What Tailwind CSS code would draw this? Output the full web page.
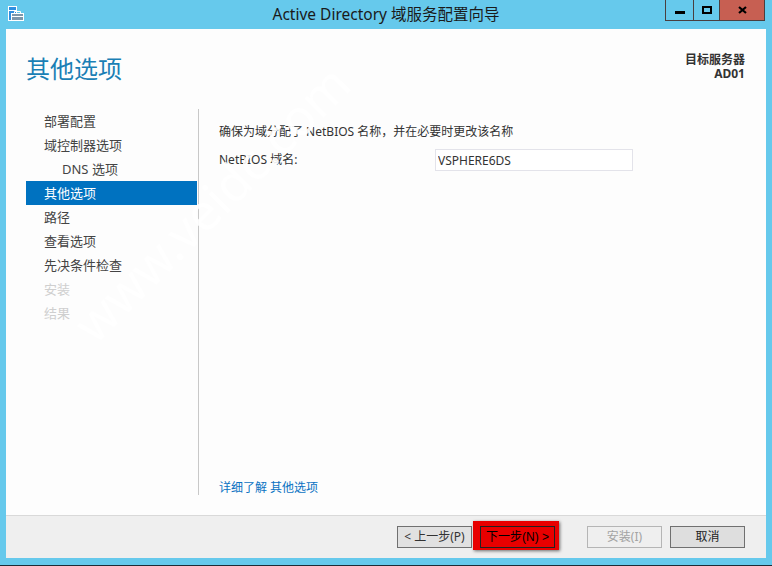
<!DOCTYPE html>
<html lang="zh">
<head>
    <meta charset="utf-8"/>
    <title>Active Directory 域服务配置向导</title>
    <script src="https://cdn.jsdelivr.net/npm/@tailwindcss/browser@4"></script>
</head>
<body class="w-[772px] h-[566px] overflow-hidden bg-[#66c9ec] relative font-['Noto_Sans','Noto_Sans_CJK_SC',sans-serif] text-[13px] text-[#333]">
    <div class="flex flex-col h-full">
        <!-- title bar -->
        <div class="h-[29px] shrink-0 flex items-start relative">
            <svg class="absolute left-[8px] top-[6px]" width="16" height="15" viewBox="0 0 16 15">
                <rect x="0.5" y="0.5" width="8" height="14" fill="#2f8fe0" stroke="#fff"/>
                <rect x="1" y="4" width="7" height="1" fill="#fff"/>
                <rect x="3.5" y="7.5" width="12" height="7" fill="#7d97ab" stroke="#fff"/>
                <path d="M6.5 7.5V5.5h6v2M4 10.5h11" fill="none" stroke="#fff"/>
            </svg>
            <div class="flex-1 text-center pt-[4px] text-[15.5px] leading-[20px] text-[#1a1a1a]">Active Directory 域服务配置向导</div>
            <div class="absolute right-[7px] top-0 flex h-[21px] border border-t-0 border-[#4a3f3f]">
                <div class="w-[28px] border-r border-[#4a3f3f] flex items-center justify-center"><div class="w-[10px] h-[3px] bg-black mt-[5px]"></div></div>
                <div class="w-[26px] border-r border-[#4a3f3f] flex items-center justify-center"><div class="w-[10px] h-[8px] border-2 border-black"></div></div>
                <div class="w-[44px] bg-[#c75f52] flex items-center justify-center">
                    <svg width="9" height="8" viewBox="0 0 9 8"><path d="M1 1l7 6M8 1l-7 6" stroke="#000" stroke-width="2.2" fill="none"/></svg>
                </div>
            </div>
        </div>
        <!-- window body -->
        <div class="mx-[6px] h-[529px] flex flex-col bg-[#fdfdfd]">
            <div class="h-[487px] shrink-0 flex flex-col border-b border-[#d9d9d9]">
                <div class="h-[80px] shrink-0 flex justify-between pl-[20px] pr-[21px]">
                    <h1 class="text-[24px] leading-[32px] pt-[24px] text-[#1a7fb5] h-fit">其他选项</h1>
                    <div class="pt-[24px] text-right font-bold text-[12px] leading-[14px] text-[#333]">
                        <div>目标服务器</div>
                        <div>AD01</div>
                    </div>
                </div>
                <div class="flex flex-1 min-h-0 pb-[20px]">
                    <nav class="w-[171px] shrink-0 flex flex-col text-[13px] leading-[24px] text-[#444] ml-[20px]">
                        <div class="h-[24px] pl-[18px]">部署配置</div>
                        <div class="h-[24px] pl-[18px]">域控制器选项</div>
                        <div class="h-[24px] pl-[36px]">DNS 选项</div>
                        <div class="h-[24px] pl-[18px] bg-[#0072c0] text-white">其他选项</div>
                        <div class="h-[24px] pl-[18px]">路径</div>
                        <div class="h-[24px] pl-[18px]">查看选项</div>
                        <div class="h-[24px] pl-[18px]">先决条件检查</div>
                        <div class="h-[24px] pl-[18px] text-[#cfcfcf]">安装</div>
                        <div class="h-[24px] pl-[18px] text-[#cfcfcf]">结果</div>
                    </nav>
                    <div class="w-px bg-[#c8c8c8] ml-[1px]"></div>
                    <div class="flex-1 flex flex-col pl-[20px] pr-[112px]">
                        <p class="pt-[14px] text-[12px] leading-[18px]">确保为域分配了 NetBIOS 名称，并在必要时更改该名称</p>
                        <div class="flex items-center mt-[8px]">
                            <label class="w-[216px] text-[12px]">NetBIOS 域名:</label>
                            <input class="w-[198px] h-[22px] border border-[#e3e3ea] bg-white px-[2px] text-[12px] text-[#333] outline-none" value="VSPHERE6DS"/>
                        </div>
                        <a class="mt-auto text-[12px] leading-[18px] mb-[-2px] text-[#0a72c2]" href="#">详细了解 其他选项</a>
                    </div>
                </div>
            </div>
            <!-- footer -->
            <div class="flex-1 bg-[#efefef] flex items-start justify-end pr-[21px] pt-[10px] text-[12px]">
                <button class="w-[75px] h-[22px] border border-[#707070] bg-[#e1e1e1] text-[#333] text-center leading-[18px]">&lt; 上一步(P)</button>
                <div class="w-[86px] h-[29px] -mt-[5px] ml-px pt-[5px] pl-[7px] bg-[#e80000] shadow-[1px_1px_3px_rgba(0,0,0,0.55)]">
                    <button class="w-[75px] h-[22px] border border-[#222] text-black font-['Liberation_Sans','Noto_Sans_CJK_SC',sans-serif] leading-[18px]">下一步(N) &gt;</button>
                </div>
                <button class="w-[75px] h-[22px] ml-[28px] border border-[#b5b5b5] text-[#a3a3a3] leading-[18px]">安装(I)</button>
                <button class="w-[75px] h-[22px] ml-[8px] border border-[#707070] bg-[#dedede] text-[#222] leading-[18px]">取消</button>
            </div>
        </div>
    </div>
    <div class="absolute left-0 right-0 bottom-0 h-px bg-[#1d2b36]"></div>
    <!-- watermark -->
    <div class="absolute left-[11px] top-[175px] w-[400px] h-[56px] -rotate-45 text-center text-[50px] leading-[56px] text-white/90 pointer-events-none whitespace-nowrap">www.veidc.com</div>
</body>
</html>
